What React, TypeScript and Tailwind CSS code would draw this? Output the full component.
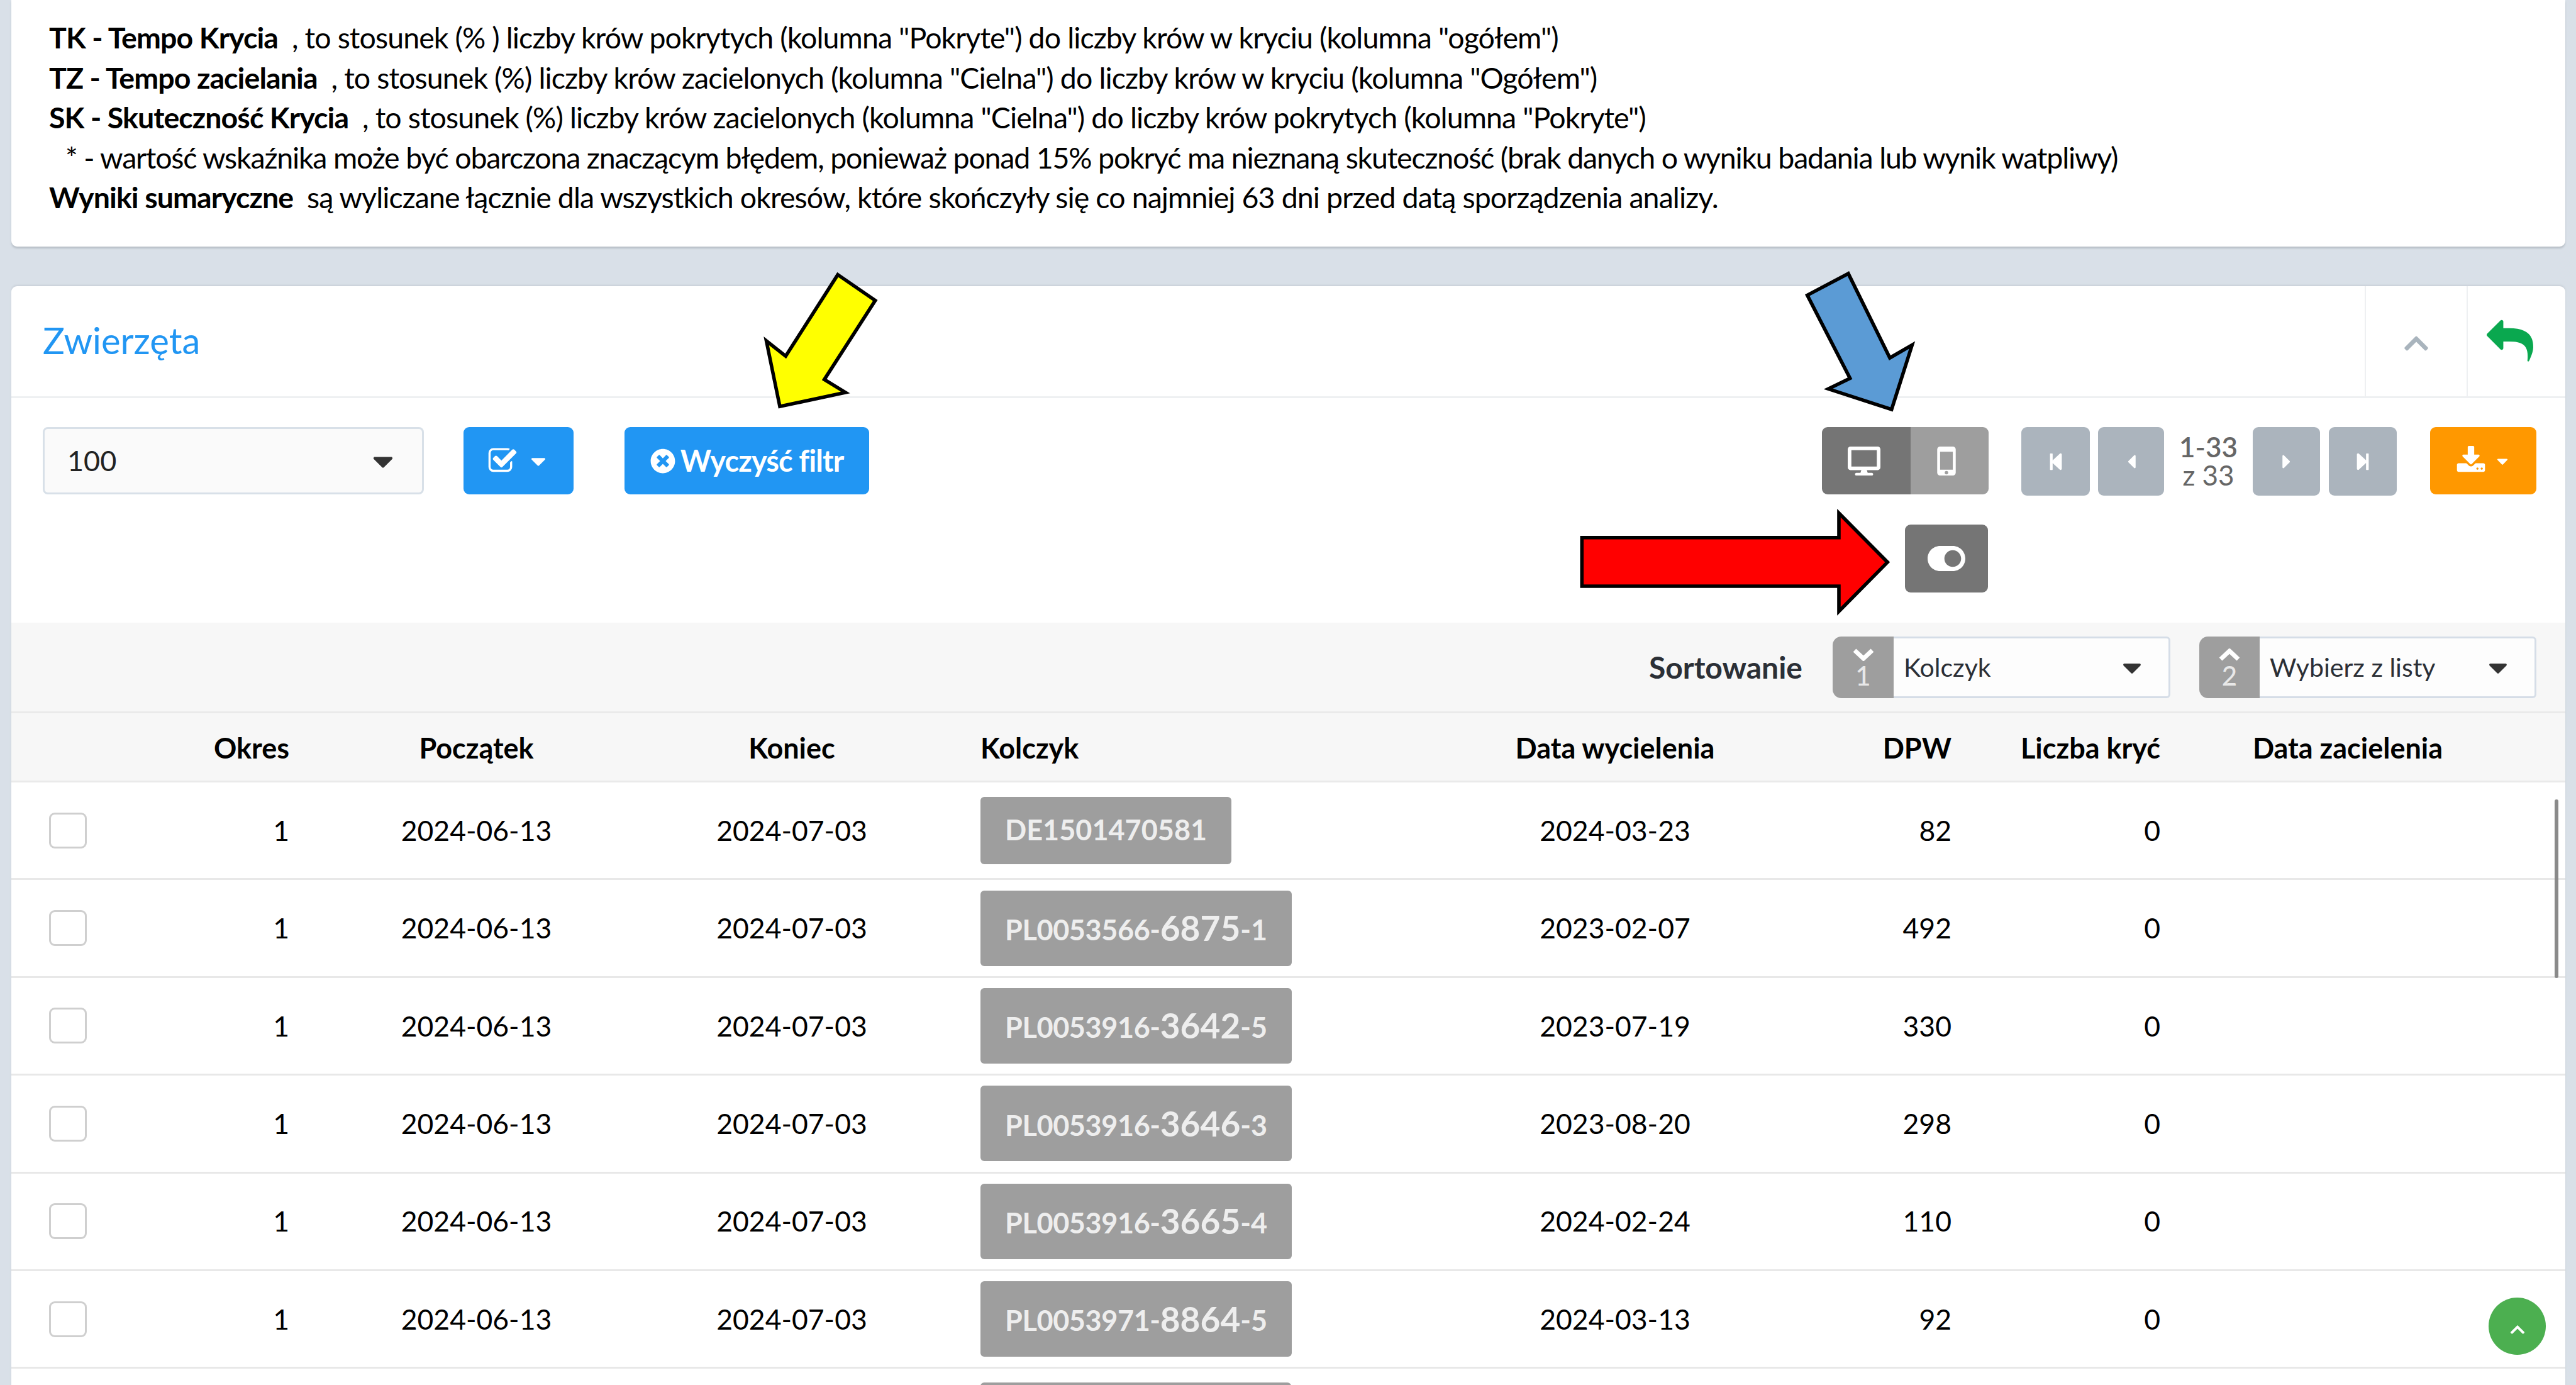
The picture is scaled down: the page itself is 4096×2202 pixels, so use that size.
import React from 'react';
import {
  FaCaretDown,
  FaCaretLeft,
  FaCaretRight,
  FaDesktop,
  FaChevronUp,
  FaStepBackward,
  FaStepForward,
  FaTimesCircle,
  FaToggleOn,
} from 'react-icons/fa';

const rows = [
  { tag: ['DE1501470581', '', ''], born: '2024-03-23', dpw: 82 },
  { tag: ['PL0053566-', '6875', '-1'], born: '2023-02-07', dpw: 492 },
  { tag: ['PL0053916-', '3642', '-5'], born: '2023-07-19', dpw: 330 },
  { tag: ['PL0053916-', '3646', '-3'], born: '2023-08-20', dpw: 298 },
  { tag: ['PL0053916-', '3665', '-4'], born: '2024-02-24', dpw: 110 },
  { tag: ['PL0053971-', '8864', '-5'], born: '2024-03-13', dpw: 92 },
];

const gridCols =
  'grid grid-cols-[139px_350px_501px_502px_736px_644px_213px_332px_596px_1fr] items-center';

const PhoneIcon = () => (
  <svg viewBox="0 0 32 50" className="w-[30px] h-[46px]" fill="white">
    <path
      fillRule="evenodd"
      d="M5 0h22a5 5 0 0 1 5 5v40a5 5 0 0 1-5 5H5a5 5 0 0 1-5-5V5a5 5 0 0 1 5-5zM5 9v31h22V9zM16 42a3 3 0 1 0 0 6 3 3 0 0 0 0-6z"
    />
  </svg>
);

const ReplyIcon = () => (
  <svg viewBox="0 0 1792 1792" className="w-[74px] h-[74px]" fill="#0aa84f">
    <path d="M1792 1120q0 166-127 451-3 7-10.5 24t-13.5 30-13 22q-12 17-28 17-15 0-23.5-10t-8.5-25q0-9 2.5-26.5t2.5-23.5q5-68 5-123 0-101-17.5-181t-48.5-138.5-80-101-105.5-69.5-133-42.5-154-21.5-175.5-6h-224v256q0 26-19 45t-45 19-45-19l-512-512q-19-19-19-45t19-45l512-512q19-19 45-19t45 19 19 45v256h224q713 0 875 403 53 134 53 333z" />
  </svg>
);

const DownloadIcon = () => (
  <svg viewBox="0 0 1792 1792" className="w-[48px] h-[48px]" fill="white">
    <path d="M1344 1344q0-26-19-45t-45-19-45 19-19 45 19 45 45 19 45-19 19-45zm256 0q0-26-19-45t-45-19-45 19-19 45 19 45 45 19 45-19 19-45zm128-224v320q0 40-28 68t-68 28h-1472q-40 0-68-28t-28-68v-320q0-40 28-68t68-28h465l135 136q58 56 136 56t136-56l136-136h464q40 0 68 28t28 68zm-325-569q17 41-14 70l-448 448q-18 19-45 19t-45-19l-448-448q-31-29-14-70 17-39 59-39h256v-448q0-26 19-45t45-19h256q26 0 45 19t19 45v448h256q42 0 59 39z" />
  </svg>
);

const CheckSquareIcon = () => (
  <svg viewBox="0 0 1792 1792" className="w-[48px] h-[48px]" fill="white">
    <path d="M1472 930v318q0 119-84.5 203.5t-203.5 84.5h-832q-119 0-203.5-84.5t-84.5-203.5v-832q0-119 84.5-203.5t203.5-84.5h832q63 0 117 25 15 7 18 23 3 17-9 29l-49 49q-10 10-23 10-3 0-9-2-23-6-45-6h-832q-66 0-113 47t-47 113v832q0 66 47 113t113 47h832q66 0 113-47t47-113v-254q0-13 9-22l64-64q10-10 23-10 6 0 12 3 20 8 20 29zm231-489l-814 814q-24 24-57 24t-57-24l-430-430q-24-24-24-57t24-57l110-110q24-24 57-24t57 24l263 263 647-647q24-24 57-24t57 24l110 110q24 24 24 57t-24 57z" />
  </svg>
);

const SortChevron = ({ up }: { up?: boolean }) => (
  <svg viewBox="0 0 34 20" className="w-[34px] h-[20px]" fill="none" stroke="white" strokeWidth="7">
    <polyline points={up ? '3,17 17,4 31,17' : '3,3 17,16 31,3'} />
  </svg>
);

const PageButton = ({ width, children }: { width: string; children: React.ReactNode }) => (
  <div className={`${width} h-[109px] rounded-[9px] bg-[#abb4bd] text-white flex items-center justify-center`}>
    {children}
  </div>
);

const SortSelect = ({
  width,
  prefix,
  label,
  up,
  num,
}: {
  width: string;
  prefix: string;
  label: string;
  up?: boolean;
  num: number;
}) => (
  <div className={`${width} h-[98px] flex`}>
    <div className={`${prefix} rounded-l-[14px] bg-[#9e9e9e] text-[#e8e8e8] flex flex-col items-center pt-[19px]`}>
      <SortChevron up={up} />
      <span className="text-[42px] leading-[42px] font-medium mt-[2px]">{num}</span>
    </div>
    <div className="flex-1 bg-[#fdfdfd] border-y-[3px] border-r-[3px] border-[#d5dde7] rounded-r-[6px] flex items-center justify-between pl-[16px] pr-[34px]">
      <span className="text-[41px] text-[#2b2f36]">{label}</span>
      <FaCaretDown className="text-[48px] text-[#333]" />
    </div>
  </div>
);

export default function App() {
  return (
    <div className="relative w-[4096px] h-[2202px] overflow-hidden bg-[#d9e0e8] pl-[18px] pr-[17px] font-['Lato',sans-serif] text-black">
      {/* Legend */}
      <div className="h-[392px] bg-white rounded-b-[9px] shadow-[0_3px_3px_#b9c0c8] pl-[60px] pt-[28px] text-[46.5px] leading-[63.5px] tracking-[-0.92px]">
        <p><b>TK - Tempo Krycia</b>&nbsp; , to stosunek (% ) liczby krów pokrytych (kolumna "Pokryte") do liczby krów w kryciu (kolumna "ogółem")</p>
        <p><b>TZ - Tempo zacielania</b>&nbsp; , to stosunek (%) liczby krów zacielonych (kolumna "Cielna") do liczby krów w kryciu (kolumna "Ogółem")</p>
        <p><b>SK - Skuteczność Krycia</b>&nbsp; , to stosunek (%) liczby krów zacielonych (kolumna "Cielna") do liczby krów pokrytych (kolumna "Pokryte")</p>
        <p className="pl-[26px] tracking-[-1.2px]">* - wartość wskaźnika może być obarczona znaczącym błędem, ponieważ ponad 15% pokryć ma nieznaną skuteczność (brak danych o wyniku badania lub wynik watpliwy)</p>
        <p><b>Wyniki sumaryczne</b>&nbsp; są wyliczane łącznie dla wszystkich okresów, które skończyły się co najmniej 63 dni przed datą sporządzenia analizy.</p>
      </div>

      {/* Animals card */}
      <div className="mt-[63px] bg-white rounded-t-[9px] shadow-[0_-2px_3px_#c9d0d8]">
        <div className="h-[178px] flex items-stretch border-b-[3px] border-[#eef0f2]">
          <div className="flex-1 flex items-center pl-[50px] pb-[4px] text-[58px] text-[#2196f3]">Zwierzęta</div>
          <div className="w-[162px] border-l-[2px] border-[#eef0f2] flex items-center justify-center text-[#a9b4bd] pt-[6px]">
            <FaChevronUp className="text-[44px]" />
          </div>
          <div className="w-[157px] border-l-[2px] border-[#eef0f2] flex items-center justify-start pl-[30px]">
            <ReplyIcon />
          </div>
        </div>

        {/* Toolbar */}
        <div className="h-[357px] pl-[50px] pr-[46px] pt-[46px] relative">
          <div className="flex items-start">
            <div className="w-[606px] h-[107px] bg-[#fafafa] border-[3px] border-[#d8e0e8] rounded-[8px] flex items-center justify-between pl-[36px] pr-[36px]">
              <span className="text-[45px] text-[#222]">100</span>
              <FaCaretDown className="text-[52px] text-[#333]" />
            </div>
            <div className="ml-[63px] w-[175px] h-[107px] bg-[#2196f3] rounded-[9px] text-white flex items-center justify-center gap-[14px]">
              <CheckSquareIcon />
              <FaCaretDown className="text-[38px]" />
            </div>
            <div className="ml-[81px] w-[389px] h-[107px] bg-[#2196f3] rounded-[9px] text-white flex items-center justify-center gap-[8px] text-[47px] font-bold tracking-[-0.9px]">
              <FaTimesCircle className="text-[40px]" />
              <span>Wyczyść filtr</span>
            </div>

            <div className="ml-auto flex items-start">
              <div className="flex h-[107px] rounded-[9px] overflow-hidden">
                <div className="w-[141px] bg-[#757575] text-white flex items-center justify-center pr-[8px]">
                  <FaDesktop className="text-[52px]" />
                </div>
                <div className="w-[124px] bg-[#9e9e9e] flex items-center justify-center pr-[10px]">
                  <PhoneIcon />
                </div>
              </div>
              <div className="ml-[52px]">
                <PageButton width="w-[109px]"><FaStepBackward className="text-[30px]" /></PageButton>
              </div>
              <div className="ml-[13px]">
                <PageButton width="w-[105px]"><FaCaretLeft className="text-[36px]" /></PageButton>
              </div>
              <div className="w-[141px] h-[107px] flex flex-col items-center justify-center text-[44px] leading-[45px] text-[#666]">
                <b className="font-semibold">1-33</b>
                <span>z 33</span>
              </div>
              <PageButton width="w-[107px]"><FaCaretRight className="text-[36px]" /></PageButton>
              <div className="ml-[14px]">
                <PageButton width="w-[108px]"><FaStepForward className="text-[30px]" /></PageButton>
              </div>
              <div className="ml-[53px] w-[169px] h-[107px] bg-[#ff9800] rounded-[9px] text-white flex items-center justify-center gap-[12px]">
                <DownloadIcon />
                <FaCaretDown className="text-[28px]" />
              </div>
            </div>
          </div>
          <div className="mt-[46px] flex justify-end pr-[872px]">
            <div className="w-[132px] h-[108px] rounded-[9px] bg-[#757575] text-white flex items-center justify-center">
              <FaToggleOn className="text-[60px]" />
            </div>
          </div>
        </div>

        {/* Sorting bar + table header */}
        <div className="bg-[#f7f7f7]">
          <div className="h-[144px] border-b-[3px] border-[#eaeaea] flex items-center justify-end pr-[46px]">
            <span className="text-[48px] font-bold text-[#2b2f36] mr-[48px]">Sortowanie</span>
            <SortSelect width="w-[537px]" prefix="w-[97px]" label="Kolczyk" num={1} />
            <div className="w-[46px]" />
            <SortSelect width="w-[536px]" prefix="w-[96px]" label="Wybierz z listy" num={2} up />
          </div>
          <div className={`${gridCols} h-[110px] border-b-[3px] border-[#eaeaea] pt-[4px] text-[45px] font-bold`}>
            <div />
            <div className="text-right pr-[47px]">Okres</div>
            <div className="text-center">Początek</div>
            <div className="text-center">Koniec</div>
            <div className="pl-[49px]">Kolczyk</div>
            <div className="text-center">Data wycielenia</div>
            <div className="text-right">DPW</div>
            <div className="text-right">Liczba kryć</div>
            <div className="text-center">Data zacielenia</div>
          </div>
        </div>

        {/* Rows */}
        {rows.map((row, i) => (
          <div key={i} className={`${gridCols} h-[155.4px] border-b-[3px] border-[#e8e8e8] text-[44.5px]`}>
            <div className="pl-[60px]">
              <div className="w-[60px] h-[57px] bg-white border-[3px] border-[#cfcfcf] rounded-[9px]" />
            </div>
            <div className="text-right pr-[47px]">1</div>
            <div className="text-center">2024-06-13</div>
            <div className="text-center">2024-07-03</div>
            <div className="pl-[49px]">
              <div className={`inline-flex items-center ${i === 0 ? 'h-[107px]' : 'h-[120px]'} px-[39px] rounded-[6px] bg-[#9e9e9e] text-[#eeeeee] font-bold text-[45px]`}>
                <span className={i === 0 ? '' : 'pt-[6px] tracking-[-0.4px]'}>{row.tag[0]}</span>
                {row.tag[1] && <span className="text-[55px] leading-none">{row.tag[1]}</span>}
                {row.tag[2] && <span className="pt-[6px]">{row.tag[2]}</span>}
              </div>
            </div>
            <div className="text-center">{row.born}</div>
            <div className="text-right">{row.dpw}</div>
            <div className="text-right">0</div>
            <div />
          </div>
        ))}
        <div className="pl-[1541px] pt-[22px]">
          <div className="w-[494px] h-[120px] rounded-[6px] bg-[#9e9e9e]" />
        </div>
      </div>

      {/* Table scrollbar and back-to-top */}
      <div className="absolute left-[4062px] top-[1271px] w-[6px] h-[284px] rounded-[3px] bg-[#8a8a8a]" />
      <div className="absolute left-[3957px] top-[2063px] w-[91px] h-[91px] rounded-full bg-[#4caf50] text-white flex items-center justify-center">
        <FaChevronUp className="text-[26px] mt-[10px]" />
      </div>

      {/* Hand-drawn annotation arrows, coordinates in the 4400-wide reference */}
      <svg viewBox="0 0 4400 2365" className="absolute inset-0 w-[4096px] h-[2202px] pointer-events-none">
        <polygon points="1431,469 1495,513 1408,648 1444,670 1332,694 1309,582 1342,608" fill="#ffff00" stroke="black" strokeWidth="6" />
        <polygon points="3157,467 3087,504 3160,646 3123,664 3231,699 3266,589 3228,611" fill="#5b9bd5" stroke="black" strokeWidth="6" />
        <polygon points="2702,918 3141,918 3141,876 3224,960 3141,1044 3141,1001 2702,1001" fill="#ff0000" stroke="black" strokeWidth="6" />
      </svg>
    </div>
  );
}
